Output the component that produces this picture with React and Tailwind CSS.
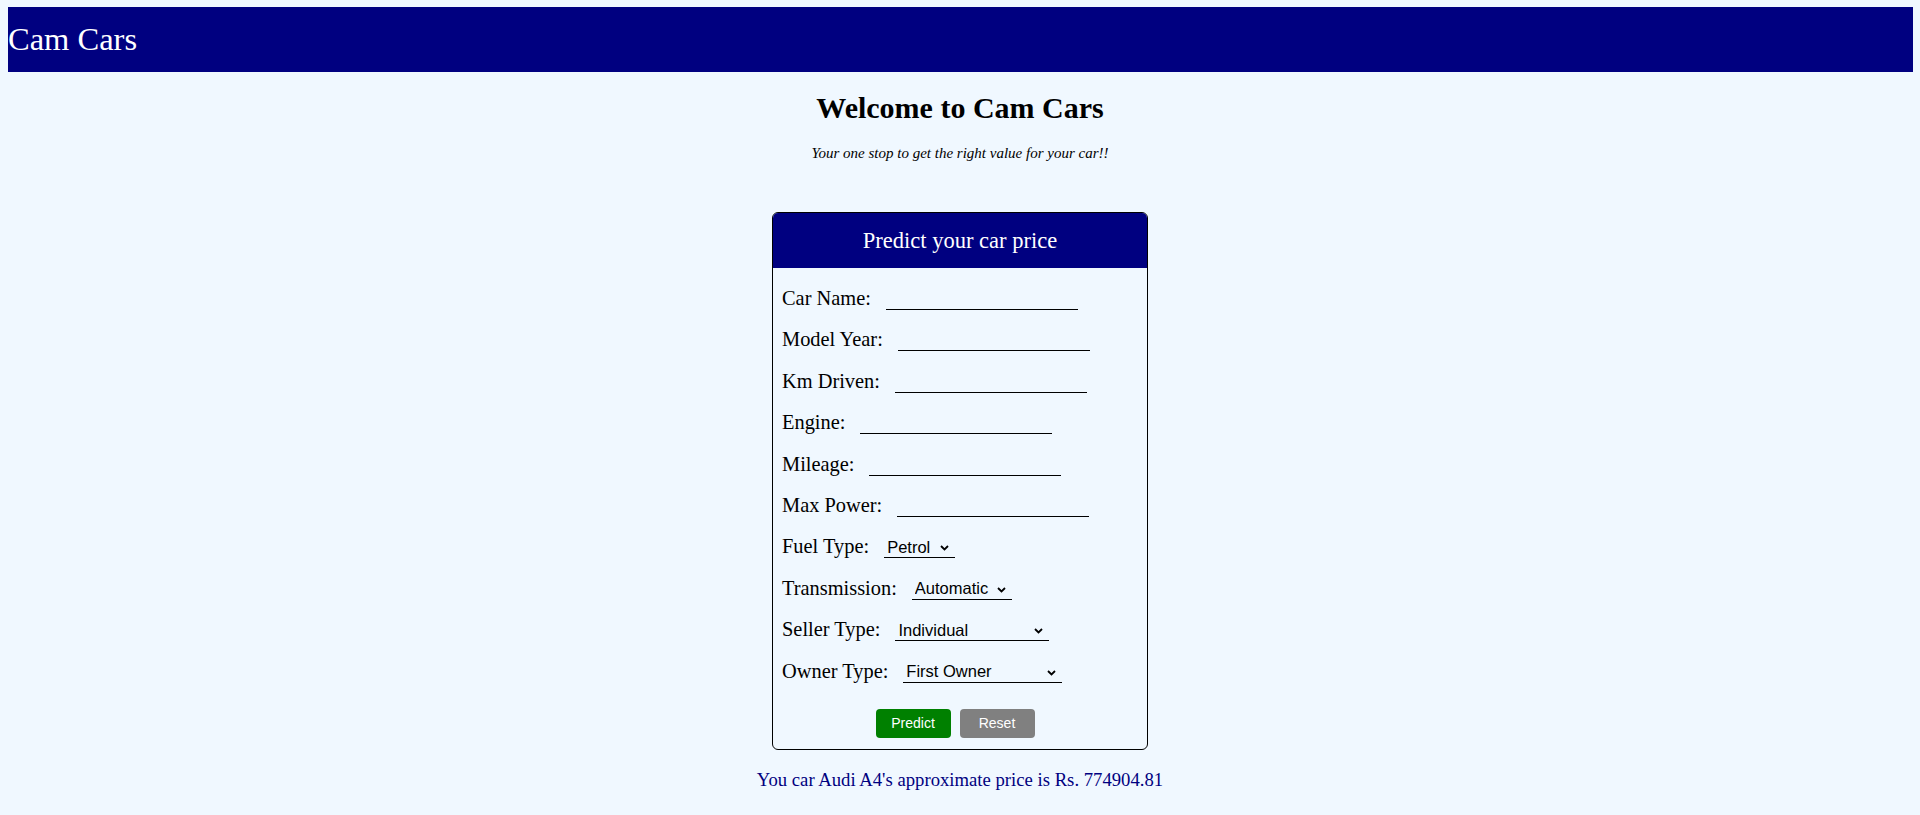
import React from "react";

const serif = { fontFamily: '"Liberation Serif", "Times New Roman", serif' };

function Chevron() {
  return (
    <svg width="9" height="6" viewBox="0 0 9 6" className="pointer-events-none absolute right-[6px] bottom-[7px]">
      <path d="M1 1 L4.5 4.5 L8 1" fill="none" stroke="#000" strokeWidth="1.8" />
    </svg>
  );
}

function TextRow({ label }) {
  return (
    <div className="flex h-[24px] items-end">
      <span className="text-[20.4px] leading-[24px] text-black whitespace-nowrap">{label}</span>
      <input
        type="text"
        className="ml-[15px] h-[22px] w-[192px] border-0 border-b border-black bg-transparent outline-none"
      />
    </div>
  );
}

function SelectRow({ label, options, width }) {
  return (
    <div className="flex h-[24px] items-end">
      <span className="text-[20.4px] leading-[24px] text-black whitespace-nowrap">{label}</span>
      <div className={`relative ml-[15px] ${width}`}>
        <select
          className="block h-[22px] w-full appearance-none border-0 border-b border-black bg-transparent pl-[3px] text-[16.5px] leading-[20px] text-black outline-none"
          style={{ fontFamily: '"Liberation Sans", Arial, sans-serif' }}
          defaultValue={options[0]}
        >
          {options.map((o) => (
            <option key={o}>{o}</option>
          ))}
        </select>
        <Chevron />
      </div>
    </div>
  );
}

export default function App() {
  return (
    <div className="min-h-screen bg-[#f0f8ff] pt-[7px]" style={serif}>
      <nav className="ml-[8px] mr-[7px] flex h-[65px] items-center bg-[#000080]">
        <span className="text-[32.5px] text-white">Cam Cars</span>
      </nav>

      <h1 className="mt-[18px] text-center text-[30px] font-bold leading-[36px] text-black">
        Welcome to Cam Cars
      </h1>
      <p className="mt-[17px] text-center text-[15px] italic leading-[20px] text-black">
        Your one stop to get the right value for your car!!
      </p>

      <div className="mx-auto mt-[49px] w-[376px] overflow-hidden rounded-[6px] border border-black">
        <div className="flex h-[55px] items-center justify-center bg-[#000080]">
          <span className="text-[22.5px] text-white">Predict your car price</span>
        </div>
        <div className="flex flex-col gap-[17.4px] pl-[9px] pt-[18px]">
          <TextRow label="Car Name:" />
          <TextRow label="Model Year:" />
          <TextRow label="Km Driven:" />
          <TextRow label="Engine:" />
          <TextRow label="Mileage:" />
          <TextRow label="Max Power:" />
          <SelectRow label="Fuel Type:" options={["Petrol", "Diesel", "CNG", "LPG"]} width="w-[71px]" />
          <SelectRow label="Transmission:" options={["Automatic", "Manual"]} width="w-[100px]" />
          <SelectRow label="Seller Type:" options={["Individual", "Dealer", "Trustmark Dealer"]} width="w-[154px]" />
          <SelectRow
            label="Owner Type:"
            options={["First Owner", "Second Owner", "Third Owner", "Fourth & Above Owner"]}
            width="w-[159px]"
          />
        </div>
        <div
          className="mt-[26.5px] mb-[11px] flex justify-center gap-[9px] pr-[10px]"
          style={{ fontFamily: '"Liberation Sans", Arial, sans-serif' }}
        >
          <button className="h-[29px] w-[75px] rounded-[4px] bg-[#008000] text-[14px] text-white">Predict</button>
          <button className="h-[29px] w-[75px] rounded-[4px] bg-[#808080] text-[14px] text-white">Reset</button>
        </div>
      </div>

      <p className="mt-[19px] text-center text-[18.7px] leading-[22px] text-[#000080]">
        You car Audi A4's approximate price is Rs. 774904.81
      </p>
    </div>
  );
}
